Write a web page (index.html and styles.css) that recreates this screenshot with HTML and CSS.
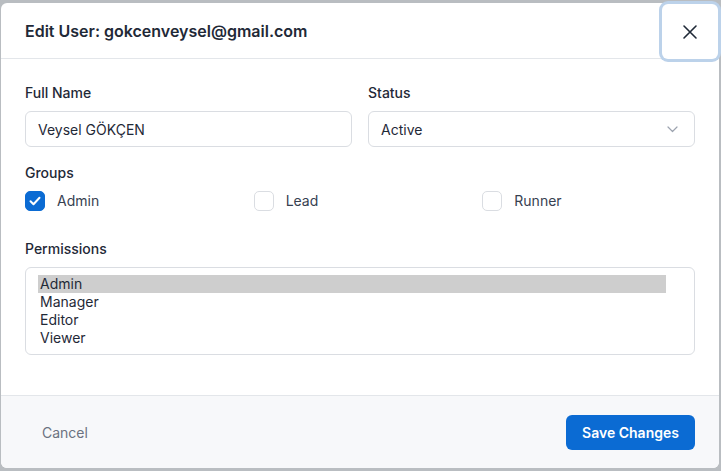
FILE: index.html
```html
<!DOCTYPE html>
<html lang="en">
<head>
<meta charset="utf-8">
<title>Edit User</title>
<link rel="stylesheet" href="styles.css">
</head>
<body>
<div class="modal">
  <div class="modal-header">
    <h2 class="modal-title">Edit User: gokcenveysel@gmail.com</h2>
    <button class="close-btn" aria-label="Close">
      <svg width="16" height="16" viewBox="0 0 16 16"><path d="M2 2L14 14M14 2L2 14" stroke="#1f2937" stroke-width="1.6" stroke-linecap="round" fill="none"/></svg>
    </button>
  </div>
  <div class="modal-body">
    <div class="row-2">
      <div class="field">
        <label class="label">Full Name</label>
        <div class="input">Veysel GÖKÇEN</div>
      </div>
      <div class="field">
        <label class="label">Status</label>
        <div class="input select">
          <span>Active</span>
          <svg width="11" height="7" viewBox="0 0 11 7"><path d="M1 1l4.5 4.5L10 1" stroke="#9ca3af" stroke-width="1.2" fill="none" stroke-linecap="round" stroke-linejoin="round"/></svg>
        </div>
      </div>
    </div>
    <div class="section">
      <label class="label">Groups</label>
      <div class="checks">
        <label class="check"><span class="box checked"><svg width="12" height="10" viewBox="0 0 12 10"><path d="M1.5 5.2l3 3L10.5 1.8" stroke="#fff" stroke-width="2" fill="none" stroke-linecap="round" stroke-linejoin="round"/></svg></span>Admin</label>
        <label class="check"><span class="box"></span>Lead</label>
        <label class="check"><span class="box"></span>Runner</label>
      </div>
    </div>
    <div class="section perms">
      <label class="label">Permissions</label>
      <div class="listbox">
        <div class="opt selected">Admin</div>
        <div class="opt">Manager</div>
        <div class="opt">Editor</div>
        <div class="opt">Viewer</div>
      </div>
    </div>
  </div>
  <div class="modal-footer">
    <button class="btn-cancel">Cancel</button>
    <button class="btn-save">Save Changes</button>
  </div>
</div>
</body>
</html>
```
FILE: styles.css
```css
* { box-sizing: border-box; }
html, body { margin: 0; height: 100%; }
body {
  background: #b9bdc1;
  padding: 3px 2px 0 1px;
  font-family: Inter, "Noto Sans", sans-serif;
  color: #1f2937;
  overflow: hidden;
}
.modal {
  position: relative;
  width: 718px;
  height: 465px;
  background: #fff;
  border-radius: 6px;
  display: flex;
  flex-direction: column;
  overflow: visible;
}
.modal-header {
  height: 56px;
  border-bottom: 1px solid #e3e6ea;
  display: flex;
  align-items: center;
  justify-content: space-between;
  padding-left: 24px;
  flex: none;
}
.modal-title {
  margin: 0;
  font-size: 16px;
  font-weight: 600;
  color: #1f2937;
}
.close-btn {
  position: absolute;
  top: 1px;
  right: 1px;
  width: 56px;
  height: 55px;
  border: none;
  background: #fff;
  border-radius: 6px;
  box-shadow: 0 0 0 3px #bcd2ea;
  display: flex;
  align-items: center;
  justify-content: center;
  padding: 0;
}
.modal-body {
  flex: 1;
  padding: 24px 24px 0 24px;
}
.row-2 {
  display: grid;
  grid-template-columns: 1fr 1fr;
  gap: 16px;
}
.field { display: flex; flex-direction: column; }
.label {
  display: block;
  font-size: 14px;
  line-height: 20px;
  font-weight: 500;
  color: #1f2937;
  margin-bottom: 8px;
}
.input {
  height: 36px;
  border: 1px solid #dadde2;
  border-radius: 6px;
  padding: 0 12px;
  font-size: 14px;
  display: flex;
  align-items: center;
  color: #1f2937;
}
.select { justify-content: space-between; padding-right: 16px; }
.section { margin-top: 16px; }
.checks {
  display: grid;
  grid-template-columns: 1fr 1fr 1fr;
  gap: 16px;
}
.check {
  display: flex;
  align-items: center;
  gap: 12px;
  font-size: 14px;
  line-height: 20px;
  color: #374151;
}
.box {
  width: 20px;
  height: 20px;
  border: 1px solid #dadde2;
  border-radius: 5px;
  display: flex;
  align-items: center;
  justify-content: center;
  flex: none;
}
.box.checked { background: #0b6bd3; border-color: #0b6bd3; }
.perms { margin-top: 28px; }
.listbox {
  border: 1px solid #dadde2;
  border-radius: 6px;
  padding: 7px 28px 7px 12px;
}
.opt {
  font-size: 14px;
  line-height: 18px;
  height: 18px;
  padding-left: 2px;
  color: #1f2937;
}
.opt.selected { background: #cecece; }
.modal-footer {
  height: 73px;
  flex: none;
  background: #f7f8fa;
  border-top: 1px solid #e3e6ea;
  border-radius: 0 0 6px 6px;
  display: flex;
  align-items: center;
  justify-content: space-between;
  padding: 0 24px;
}
.btn-cancel {
  height: 35px;
  padding: 0 17px;
  border: none;
  background: transparent;
  font-family: inherit;
  font-size: 14px;
  color: #6b7280;
}
.btn-save {
  height: 35px;
  width: 129px;
  border: none;
  border-radius: 6px;
  background: #0b6bd3;
  color: #fff;
  font-family: inherit;
  font-size: 14px;
  font-weight: 600;
}
```
